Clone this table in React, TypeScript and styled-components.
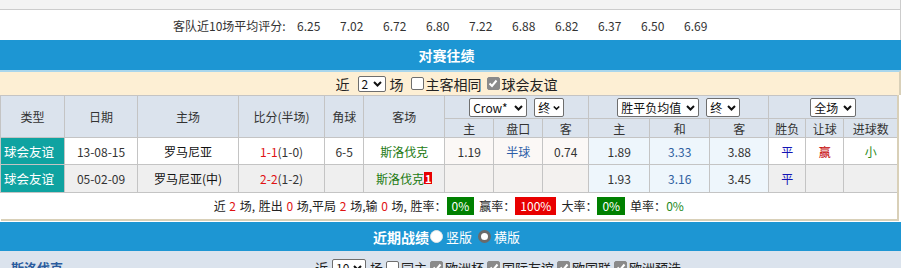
import React from "react";
import styled, { createGlobalStyle } from "styled-components";

const Global = createGlobalStyle`
  html, body { margin: 0; padding: 0; background: #fff; }
  body {
    font-family: "Microsoft YaHei", "Noto Sans CJK SC", "Noto Sans", sans-serif;
    font-size: 12px;
    color: #333;
  }
`;

const Page = styled.div`
  width: 901px;
  overflow: hidden;
`;

const TopStrip = styled.div`
  height: 9px;
  background: #f3f3f3;
  border-bottom: 1px solid #cccccc;
  border-right: 1px solid #cccccc;
  overflow: hidden;
  padding-left: 173px;
`;

const TopStripText = styled.div`
  margin-top: -14px;
  line-height: 16px;
`;

const RatingRow = styled.div`
  height: 30px;
  display: flex;
  align-items: center;
  padding-left: 173px;
  border-right: 1px solid #cccccc;
`;

const RatingLabel = styled.span`
  width: 124px;
  flex: none;
`;

const RatingValue = styled.span`
  width: 43px;
  flex: none;
`;

const SectionBar = styled.div`
  height: 30px;
  background: #1d96d3;
  color: #fff;
  font-size: 14px;
  font-weight: bold;
  display: flex;
  align-items: center;
  justify-content: center;
  padding-right: 8px;
`;

const FilterBar = styled.div`
  height: 23px;
  border-top: 2px solid #a9d6ec;
  background: #fdefd4;
  border-right: 2px solid #d9d0b8;
  display: flex;
  align-items: center;
  justify-content: center;
  padding-right: 8px;
  padding-left: 2px;
  font-size: 14px;
  color: #222;
`;

const FilterGap = styled.span<{ $w: number }>`
  display: inline-block;
  width: ${(p) => p.$w}px;
`;

const SelectBox = styled.span<{ $w?: number; $h?: number }>`
  display: inline-flex;
  align-items: center;
  justify-content: space-between;
  box-sizing: border-box;
  height: ${(p) => p.$h ?? 17}px;
  ${(p) => (p.$w ? `width: ${p.$w}px;` : "")}
  padding: 0 3px 0 3px;
  gap: 3px;
  border: 1px solid #6e6e6e;
  border-radius: 2px;
  background: #fff;
  color: #111;
  font-size: 12px;
  line-height: 1;
  vertical-align: middle;
`;

const Box = styled.span<{ $checked?: boolean }>`
  display: inline-flex;
  align-items: center;
  justify-content: center;
  box-sizing: border-box;
  width: 13px;
  height: 13px;
  border-radius: 2px;
  border: 1px solid ${(p) => (p.$checked ? "#8a8a8a" : "#6e6e6e")};
  background: ${(p) => (p.$checked ? "#8a8a8a" : "#fff")};
  margin: 0 2px 0 3px;
  vertical-align: middle;
`;

const Chevron = () => (
  <svg width="9" height="6" viewBox="0 0 9 6">
    <path d="M1 1 L4.5 4.5 L8 1" stroke="#111" strokeWidth="2" fill="none" />
  </svg>
);

const Tick = () => (
  <svg width="10" height="9" viewBox="0 0 10 9">
    <path d="M1.5 4.5 L4 7 L8.5 1.5" stroke="#fff" strokeWidth="2" fill="none" />
  </svg>
);

const Select = ({ label, w, h }: { label: string; w?: number; h?: number }) => (
  <SelectBox $w={w} $h={h}>
    <span>{label}</span>
    <Chevron />
  </SelectBox>
);

const Check = ({ checked }: { checked?: boolean }) => (
  <Box $checked={checked}>{checked ? <Tick /> : null}</Box>
);

const Table = styled.table`
  border-collapse: collapse;
  table-layout: fixed;
  width: 899px;
  border-right: 2px solid #d9d0b8;
  border-bottom: 2px solid #d9d0b8;
`;

const Th = styled.th<{ $h?: number }>`
  background: #dbe3ed;
  border: 1px solid #c4c4c4;
  font-weight: normal;
  color: #333;
  font-size: 12px;
  padding: 0;
  text-align: center;
  ${(p) => (p.$h ? `height: ${p.$h}px;` : "")}
`;

const Td = styled.td<{ $bg?: string; $color?: string; $left?: boolean; $h?: number }>`
  border: 1px solid #c4c4c4;
  background: ${(p) => p.$bg ?? "transparent"};
  color: ${(p) => p.$color ?? "#333"};
  font-size: 12px;
  padding: 0;
  text-align: ${(p) => (p.$left ? "left" : "center")};
  ${(p) => (p.$left ? "padding-left: 3px;" : "")}
  ${(p) => (p.$h ? `height: ${p.$h}px;` : "")}
  white-space: nowrap;
`;

const Tr = styled.tr<{ $bg?: string }>`
  background: ${(p) => p.$bg ?? "#fff"};
`;

const TypeTd = styled(Td)`
  background: #0fa3a1;
  color: #fff;
  font-size: 12.5px;
`;

const Red = styled.span`
  color: #e01212;
`;

const Badge = styled.span`
  display: inline-block;
  background: #e80000;
  color: #fff;
  font-weight: bold;
  font-size: 11px;
  line-height: 12px;
  padding: 0 1px;
  vertical-align: 1px;
`;

const SummaryTd = styled.td`
  height: 26px;
  padding: 0;
  text-align: center;
  font-size: 12px;
  word-spacing: 1px;
  color: #222;
`;

const RateBox = styled.span<{ $bg: string }>`
  display: inline-block;
  background: ${(p) => p.$bg};
  color: #fff;
  padding: 0 5px;
  line-height: 18px;
  margin: 0 5px 0 0;
  word-spacing: 0;
`;

const GreenText = styled.span`
  color: #1d8a1d;
`;

const RecentBar = styled(SectionBar)`
  height: 29px;
  margin-top: 1px;
`;

const RadioDot = styled.span<{ $checked?: boolean }>`
  display: inline-block;
  box-sizing: border-box;
  width: 13px;
  height: 13px;
  border-radius: 50%;
  background: #fff;
  border: ${(p) => (p.$checked ? "3px solid #6a6a6a" : "1px solid #e6e6e6")};
  margin: 0 3px 0 ${(p) => (p.$checked ? 6 : 1)}px;
  vertical-align: middle;
`;

const RadioLabel = styled.span`
  font-weight: normal;
  font-size: 13px;
`;

const TeamBar = styled.div`
  height: 30px;
  background: #dbe3ed;
  display: flex;
  align-items: flex-start;
  padding-top: 7px;
  font-size: 13px;
`;

const TeamName = styled.span`
  color: #2b5c9e;
  font-weight: bold;
  width: 304px;
  padding-left: 11px;
  flex: none;
`;

const TeamFilters = styled.span`
  display: inline-flex;
  align-items: center;
  color: #222;
`;

const widths = [64, 73, 101, 86, 39, 81, 49, 49, 46, 61, 60, 59, 37, 38, 54];
const ratings = ["6.25", "7.02", "6.72", "6.80", "7.22", "6.88", "6.82", "6.37", "6.50", "6.69"];

const WARM = "#fbf8f6";
const LBLUE = "#eef6fc";
const GRAY = "#efefef";

export default function App() {
  return (
    <Page>
      <Global />
      <TopStrip>
        <TopStripText>主队近10场平均评分:</TopStripText>
      </TopStrip>
      <RatingRow>
        <RatingLabel>客队近10场平均评分:</RatingLabel>
        {ratings.map((r, i) => (
          <RatingValue key={i}>{r}</RatingValue>
        ))}
      </RatingRow>
      <SectionBar>对赛往绩</SectionBar>
      <FilterBar>
        <span>近</span>
        <FilterGap $w={8} />
        <Select label="2" w={28} h={16} />
        <FilterGap $w={4} />
        <span>场</span>
        <FilterGap $w={4} />
        <Check />
        <span>主客相同</span>
        <FilterGap $w={2} />
        <Check checked />
        <span>球会友谊</span>
      </FilterBar>
      <Table>
        <colgroup>
          {widths.map((w, i) => (
            <col key={i} style={{ width: w }} />
          ))}
        </colgroup>
        <thead>
          <tr>
            <Th rowSpan={2}>类型</Th>
            <Th rowSpan={2}>日期</Th>
            <Th rowSpan={2}>主场</Th>
            <Th rowSpan={2}>比分(半场)</Th>
            <Th rowSpan={2}>角球</Th>
            <Th rowSpan={2}>客场</Th>
            <Th colSpan={3} $h={22}>
              <Select label="Crow*" w={58} h={19} />
              <FilterGap $w={7} />
              <Select label="终" w={30} h={19} />
            </Th>
            <Th colSpan={3}>
              <Select label="胜平负均值" w={82} h={19} />
              <FilterGap $w={7} />
              <Select label="终" w={34} h={19} />
            </Th>
            <Th colSpan={3}>
              <Select label="全场" w={46} h={19} />
            </Th>
          </tr>
          <tr>
            <Th $h={18}>主</Th>
            <Th>盘口</Th>
            <Th>客</Th>
            <Th>主</Th>
            <Th>和</Th>
            <Th>客</Th>
            <Th>胜负</Th>
            <Th>让球</Th>
            <Th>进球数</Th>
          </tr>
        </thead>
        <tbody>
          <Tr>
            <TypeTd $left $h={26}>球会友谊</TypeTd>
            <Td>13-08-15</Td>
            <Td $color="#111">罗马尼亚</Td>
            <Td>
              <Red>1-1</Red>(1-0)
            </Td>
            <Td>6-5</Td>
            <Td $color="#237a12">斯洛伐克</Td>
            <Td $bg={WARM}>1.19</Td>
            <Td $bg={WARM} $color="#2d5ea8">半球</Td>
            <Td $bg={WARM}>0.74</Td>
            <Td $bg={LBLUE}>1.89</Td>
            <Td $bg={LBLUE} $color="#2f5f9f">3.33</Td>
            <Td $bg={LBLUE}>3.88</Td>
            <Td $color="#1515b5">平</Td>
            <Td $color="#c40000">赢</Td>
            <Td $color="#2a8a1a">小</Td>
          </Tr>
          <Tr $bg={GRAY}>
            <TypeTd $left $h={27}>球会友谊</TypeTd>
            <Td>05-02-09</Td>
            <Td $color="#111">罗马尼亚(中)</Td>
            <Td>
              <Red>2-2</Red>(1-2)
            </Td>
            <Td></Td>
            <Td $color="#237a12">
              斯洛伐克<Badge>1</Badge>
            </Td>
            <Td $bg="#f3f1ef"></Td>
            <Td $bg="#f3f1ef"></Td>
            <Td $bg="#f3f1ef"></Td>
            <Td $bg={LBLUE}>1.93</Td>
            <Td $bg={LBLUE} $color="#2f5f9f">3.16</Td>
            <Td $bg={LBLUE}>3.45</Td>
            <Td $color="#1515b5">平</Td>
            <Td></Td>
            <Td></Td>
          </Tr>
          <tr>
            <SummaryTd colSpan={15}>
              近 <Red>2</Red> 场, 胜出 <Red>0</Red> 场,平局 <Red>2</Red> 场,输 <Red>0</Red> 场, 胜率：
              <RateBox $bg="#008000">0%</RateBox>赢率：
              <RateBox $bg="#e80000">100%</RateBox>大率：
              <RateBox $bg="#008000">0%</RateBox>单率：<GreenText>0%</GreenText>
            </SummaryTd>
          </tr>
        </tbody>
      </Table>
      <RecentBar>
        近期战绩
        <RadioDot />
        <RadioLabel>竖版</RadioLabel>
        <RadioDot $checked />
        <RadioLabel>横版</RadioLabel>
      </RecentBar>
      <TeamBar>
        <TeamName>斯洛伐克</TeamName>
        <TeamFilters>
          <span>近</span>
          <FilterGap $w={4} />
          <Select label="10" w={34} h={17} />
          <FilterGap $w={4} />
          <span>场</span>
          <Check />
          <span>同主</span>
          <Check checked />
          <span>欧洲杯</span>
          <Check checked />
          <span>国际友谊</span>
          <Check checked />
          <span>欧国联</span>
          <Check checked />
          <span>欧洲预选</span>
        </TeamFilters>
      </TeamBar>
    </Page>
  );
}
